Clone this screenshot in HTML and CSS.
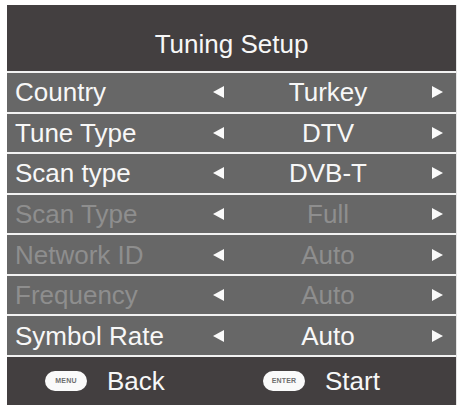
FILE: index.html
```html
<!DOCTYPE html>
<html>
<head>
<meta charset="utf-8">
<link rel="stylesheet" href="styles.css">
</head>
<body>
<div class="panel">
  <div class="header">Tuning Setup</div>
  <div class="row"><span class="label">Country</span><span class="arrow left"></span><span class="value">Turkey</span><span class="arrow right"></span></div>
  <div class="row"><span class="label">Tune Type</span><span class="arrow left"></span><span class="value">DTV</span><span class="arrow right"></span></div>
  <div class="row"><span class="label">Scan type</span><span class="arrow left"></span><span class="value">DVB-T</span><span class="arrow right"></span></div>
  <div class="row disabled"><span class="label">Scan Type</span><span class="arrow left"></span><span class="value">Full</span><span class="arrow right"></span></div>
  <div class="row disabled"><span class="label">Network ID</span><span class="arrow left"></span><span class="value">Auto</span><span class="arrow right"></span></div>
  <div class="row disabled"><span class="label">Frequency</span><span class="arrow left"></span><span class="value">Auto</span><span class="arrow right"></span></div>
  <div class="row"><span class="label">Symbol Rate</span><span class="arrow left"></span><span class="value">Auto</span><span class="arrow right"></span></div>
  <div class="footer">
    <div class="hint first"><span class="pill">MENU</span><span class="hint-text">Back</span></div>
    <div class="hint"><span class="pill">ENTER</span><span class="hint-text">Start</span></div>
  </div>
</div>
</body>
</html>
```
FILE: styles.css
```css
html, body {
  margin: 0;
  padding: 0;
  background: #ffffff;
}
body {
  padding: 5px 0 0 7px;
  font-family: "Liberation Sans", Arial, sans-serif;
}
.panel {
  width: 449px;
  border-right: 1px solid #e4e4e4;
  color: #f7f7f7;
}
.header {
  height: 66px;
  box-sizing: border-box;
  padding-top: 24px;
  background: #433f40;
  text-align: center;
  font-size: 26px;
  line-height: 30px;
}
.row {
  display: grid;
  grid-template-columns: 206px 11px 1fr 11px 13px;
  align-items: center;
  height: 38.57px;
  border-top: 2px solid #f2f2f2;
  background: #676767;
  font-size: 26px;
  line-height: 38px;
}
.label {
  padding-left: 8px;
  white-space: nowrap;
}
.value {
  text-align: center;
}
.disabled .label,
.disabled .value {
  color: #8e8e8e;
}
.arrow {
  width: 0;
  height: 0;
  border-top: 6px solid transparent;
  border-bottom: 6px solid transparent;
}
.arrow.left {
  border-right: 11px solid #fafafa;
}
.arrow.right {
  border-left: 11px solid #fafafa;
}
.footer {
  display: flex;
  align-items: center;
  height: 48px;
  border-top: 2px solid #f2f2f2;
  background: #433f40;
  padding-left: 38px;
}
.hint {
  display: flex;
  align-items: center;
}
.hint.first {
  width: 218px;
}
.pill {
  display: inline-flex;
  align-items: center;
  justify-content: center;
  width: 42px;
  height: 20px;
  border-radius: 10px;
  background: #fafafa;
  color: #6e6e6e;
  font-size: 7px;
  font-weight: bold;
  letter-spacing: 0.2px;
}
.hint-text {
  margin-left: 20px;
  font-size: 26px;
  line-height: 30px;
}
```
